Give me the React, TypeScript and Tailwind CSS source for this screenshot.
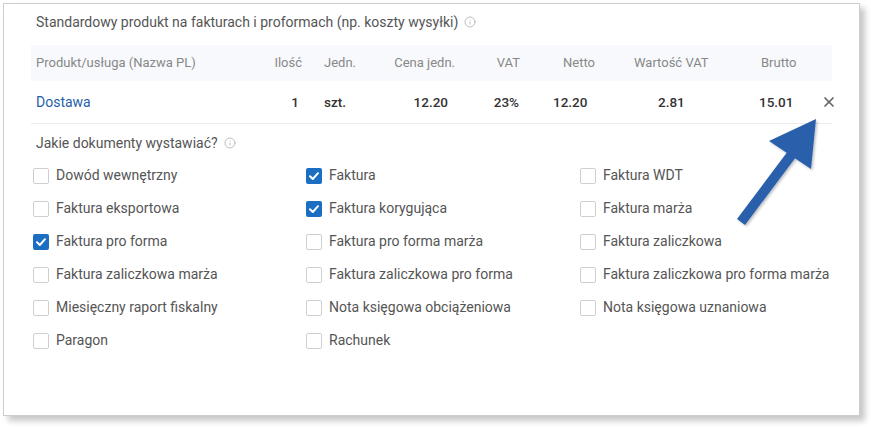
import { Info, X } from 'lucide-react';

const font = { fontFamily: 'Roboto, "Noto Sans", sans-serif' };

const docs = [
  { label: 'Dowód wewnętrzny', checked: false },
  { label: 'Faktura', checked: true },
  { label: 'Faktura WDT', checked: false },
  { label: 'Faktura eksportowa', checked: false },
  { label: 'Faktura korygująca', checked: true },
  { label: 'Faktura marża', checked: false },
  { label: 'Faktura pro forma', checked: true },
  { label: 'Faktura pro forma marża', checked: false },
  { label: 'Faktura zaliczkowa', checked: false },
  { label: 'Faktura zaliczkowa marża', checked: false },
  { label: 'Faktura zaliczkowa pro forma', checked: false },
  { label: 'Faktura zaliczkowa pro forma marża', checked: false },
  { label: 'Miesięczny raport fiskalny', checked: false },
  { label: 'Nota księgowa obciążeniowa', checked: false },
  { label: 'Nota księgowa uznaniowa', checked: false },
  { label: 'Paragon', checked: false },
  { label: 'Rachunek', checked: false },
];

const cols = 'grid grid-cols-[224px_55px_60px_95px_65px_75px_125px_90px_18px]';

function Checkbox({ checked }: { checked: boolean }) {
  if (checked) {
    return (
      <span className="flex h-[16px] w-[16px] items-center justify-center rounded-[2px] bg-[#1b6ec2]">
        <svg width="12" height="12" viewBox="0 0 12 12" fill="none">
          <polyline points="2,6.3 4.8,9 10,3.2" stroke="white" strokeWidth="2" strokeLinecap="round" strokeLinejoin="round" />
        </svg>
      </span>
    );
  }
  return <span className="h-[16px] w-[16px] rounded-[2px] border border-[#cfcfcf] bg-white" />;
}

export default function App() {
  return (
    <div className="relative h-[427px] w-[871px] bg-white p-[3px]" style={font}>
      <div className="h-[413px] w-[857px] border border-[#cdcdcd] bg-white px-[27px] pt-[8px] shadow-[5px_5px_6px_rgba(0,0,0,0.22)]">
        <div className="flex items-center gap-[6px] pl-[5px] text-[14px] leading-[20px] text-[#555]">
          Standardowy produkt na fakturach i proformach (np. koszty wysyłki)
          <Info className="h-[12px] w-[12px] text-[#aaa]" strokeWidth={1.5} />
        </div>

        <div className={`${cols} mt-[13px] h-[36px] items-center bg-[#f7f9fc] text-[13px] text-[#888]`}>
          <span className="pl-[5px]">Produkt/usługa (Nazwa PL)</span>
          <span className="pr-[8px] text-right">Ilość</span>
          <span className="pl-[14px]">Jedn.</span>
          <span className="pr-[10px] text-right">Cena jedn.</span>
          <span className="pr-[10px] text-right">VAT</span>
          <span className="pl-[33px]">Netto</span>
          <span className="pl-[29px]">Wartość VAT</span>
          <span className="pl-[31px]">Brutto</span>
          <span />
        </div>
        <div className={`${cols} h-[43px] items-center border-b border-[#ececec] text-[13.5px] font-medium text-[#333]`}>
          <span className="pl-[5px] text-[14px] font-normal text-[#1f5fa8]">Dostawa</span>
          <span className="pr-[11px] text-right">1</span>
          <span className="pl-[14px]">szt.</span>
          <span className="pr-[17px] text-right">12.20</span>
          <span className="pr-[11px] text-right">23%</span>
          <span className="pl-[23px]">12.20</span>
          <span className="pl-[53px]">2.81</span>
          <span className="pl-[29px]">15.01</span>
          <span className="flex justify-end pr-[1px]">
            <X className="h-[16px] w-[16px] text-[#666]" strokeWidth={2.6} />
          </span>
        </div>

        <div className="mt-[9px] flex items-center gap-[6px] pl-[5px] text-[14px] leading-[20px] text-[#555]">
          Jakie dokumenty wystawiać?
          <Info className="h-[12px] w-[12px] text-[#aaa]" strokeWidth={1.5} />
        </div>

        <div className="mt-[6px] grid grid-cols-[273px_274px_1fr] pl-[2px]">
          {docs.map((d) => (
            <label key={d.label} className="flex h-[33px] items-center gap-[7px] text-[14px] text-[#555]">
              <Checkbox checked={d.checked} />
              <span>{d.label}</span>
            </label>
          ))}
        </div>
      </div>

      <svg className="absolute left-0 top-0" width="871" height="427" viewBox="0 0 871 427">
        <defs>
          <filter id="sh" x="-20%" y="-20%" width="140%" height="140%">
            <feDropShadow dx="1.5" dy="1.5" stdDeviation="1.2" floodColor="#000" floodOpacity="0.25" />
          </filter>
        </defs>
        <g filter="url(#sh)" fill="#2a5fab">
          <line x1="741" y1="222" x2="795" y2="150" stroke="#2a5fab" strokeWidth="10" />
          <polygon points="816,119 769,141 811,169" />
        </g>
      </svg>
    </div>
  );
}
